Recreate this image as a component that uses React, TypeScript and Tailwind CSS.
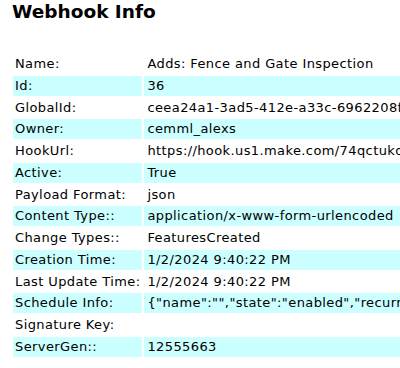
const rows: [string, string][] = [
  ["Name:", "Adds: Fence and Gate Inspection"],
  ["Id:", "36"],
  ["GlobalId:", "ceea24a1-3ad5-412e-a33c-6962208f4b1d"],
  ["Owner:", "cemml_alexs"],
  ["HookUrl:", "https://hook.us1.make.com/74qctukq2rmx9bfa8h3wz"],
  ["Active:", "True"],
  ["Payload Format:", "json"],
  ["Content Type::", "application/x-www-form-urlencoded"],
  ["Change Types::", "FeaturesCreated"],
  ["Creation Time:", "1/2/2024 9:40:22 PM"],
  ["Last Update Time:", "1/2/2024 9:40:22 PM"],
  ["Schedule Info:", '{"name":"","state":"enabled","recurrenceInfo":{"startDate":null}}'],
  ["Signature Key:", ""],
  ["ServerGen::", "12555663"],
];

export default function App() {
  return (
    <div className="w-[400px] h-[368px] overflow-hidden bg-white text-black font-['DejaVu_Sans',Verdana,sans-serif]">
      <h2 className="pl-[12px] pt-[1px] text-[18.5px] font-bold leading-[22px]">Webhook Info</h2>
      <table className="mt-[29px] ml-[11px] border-separate border-spacing-[2px] text-[13px] leading-[15.75px] tracking-[0.4px]">
        <tbody>
          {rows.map(([label, value], i) => (
            <tr key={label} className={i % 2 === 1 ? "bg-[#ccffff]" : ""}>
              <td className="w-[129px] min-w-[129px] px-[2px] py-[2px] whitespace-nowrap">{label}</td>
              <td className="pl-[3px] pr-[2px] py-[2px] whitespace-nowrap">{value}</td>
            </tr>
          ))}
        </tbody>
      </table>
    </div>
  );
}
